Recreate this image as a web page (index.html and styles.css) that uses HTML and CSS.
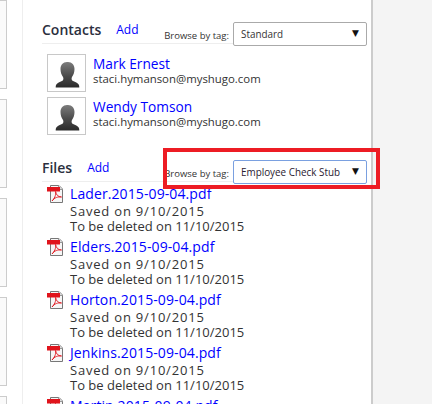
FILE: index.html
```html
<!DOCTYPE html>
<html lang="en">
<head>
  <meta charset="UTF-8">
  <title>Contacts and Files</title>
  <link rel="stylesheet" href="styles.css">
</head>
<body>

<svg width="0" height="0" class="defs">
  <linearGradient id="personFill" x1="0" y1="0" x2="0" y2="1">
    <stop offset="0" stop-color="#7c7c7c"/>
    <stop offset="0.55" stop-color="#4a4a4a"/>
    <stop offset="1" stop-color="#2b2b2b"/>
  </linearGradient>
  <symbol id="person" viewBox="0 0 37 36">
    <path d="M19 7c-4 0-6.500 3-6.500 7 0 3 1 6 2.500 8 .7 1 .5 3-.5 3.700-2 1.300-5 1.800-6 3.500-.7 1.100-.8 2-.8 3.300h23.600c0-1.300-.1-2.200-.8-3.300-1-1.700-4-2.200-6-3.500-1-.7-1.200-2.700-.5-3.700 1.500-2 2.500-5 2.500-8 0-4-2.500-7-6.500-7z" fill="url(#personFill)"/>
  </symbol>
  <symbol id="pdf" viewBox="0 0 16 18">
    <path d="M3.500 .5H12L15.500 4V17.500H3.500z" fill="#f6f6f6" stroke="#777"/>
    <path d="M11.500 .5V4.500H15.500" fill="#ddd" stroke="#999"/>
    <rect x="0" y="2" width="13" height="4.500" fill="#e0141c"/>
    <path d="M5 16C7 14 9.500 10 8.500 6.500 9 9.500 11 12 14.500 12 11 11.500 7.500 12.500 5 16z" fill="none" stroke="#e0141c" stroke-width="0.9"/>
  </symbol>
</svg>

<div class="side-panels">
  <div class="side-panel"></div>
  <div class="side-panel"></div>
  <div class="side-panel"></div>
  <div class="side-panel"></div>
  <div class="side-panel"></div>
</div>

<main class="content">
  <section class="contacts">
    <div class="section-head">
      <h2>Contacts</h2>
      <a href="#" class="add-link">Add</a>
      <div class="tag-filter">
        <span class="tag-label">Browse by tag:</span>
        <div class="select-box">Standard<span class="arrow">▼</span></div>
      </div>
    </div>
    <div class="contact">
      <div class="avatar"><svg width="37" height="36"><use href="#person"/></svg></div>
      <div class="contact-info">
        <a href="#">Mark Ernest</a>
        <div>staci.hymanson@myshugo.com</div>
      </div>
    </div>
    <div class="contact">
      <div class="avatar"><svg width="37" height="36"><use href="#person"/></svg></div>
      <div class="contact-info">
        <a href="#">Wendy Tomson</a>
        <div>staci.hymanson@myshugo.com</div>
      </div>
    </div>
  </section>

  <section class="files">
    <div class="section-head">
      <h2>Files</h2>
      <a href="#" class="add-link">Add</a>
      <div class="tag-filter highlighted">
        <span class="tag-label">Browse by tag:</span>
        <div class="select-box focused">Employee Check Stub<span class="arrow">▼</span></div>
      </div>
    </div>
    <div class="file">
      <svg width="16" height="18"><use href="#pdf"/></svg>
      <div class="file-info"><a href="#">Lader.2015-09-04.pdf</a><div class="saved">Saved on 9/10/2015</div><div>To be deleted on 11/10/2015</div></div>
    </div>
    <div class="file">
      <svg width="16" height="18"><use href="#pdf"/></svg>
      <div class="file-info"><a href="#">Elders.2015-09-04.pdf</a><div class="saved">Saved on 9/10/2015</div><div>To be deleted on 11/10/2015</div></div>
    </div>
    <div class="file">
      <svg width="16" height="18"><use href="#pdf"/></svg>
      <div class="file-info"><a href="#">Horton.2015-09-04.pdf</a><div class="saved">Saved on 9/10/2015</div><div>To be deleted on 11/10/2015</div></div>
    </div>
    <div class="file">
      <svg width="16" height="18"><use href="#pdf"/></svg>
      <div class="file-info"><a href="#">Jenkins.2015-09-04.pdf</a><div class="saved">Saved on 9/10/2015</div><div>To be deleted on 11/10/2015</div></div>
    </div>
    <div class="file file-cut">
      <svg width="16" height="18"><use href="#pdf"/></svg>
      <div class="file-info"><a href="#">Martin.2015-09-04.pdf</a></div>
    </div>
  </section>
</main>

</body>
</html>
```

FILE: styles.css
```css
* {
  margin: 0;
  padding: 0;
  box-sizing: border-box;
}

html, body {
  height: 404px;
  overflow: hidden;
}

body {
  display: flex;
  background: #f4f4f4;
  font-family: "Open Sans", sans-serif;
  font-size: 13px;
  color: #333;
}

a {
  color: #0000ff;
  text-decoration: none;
}

.defs {
  position: absolute;
}

.side-panels {
  width: 23px;
  flex: none;
  background: #fff;
  border-right: 1px solid #eee;
  display: flex;
  flex-direction: column;
  gap: 10px;
  overflow: hidden;
}

.side-panel {
  width: 7px;
  height: 89px;
  flex: none;
  background: #fafafa;
  border: 1px solid #ccc;
  border-left: none;
}

.content {
  width: 350px;
  height: 404px;
  flex: none;
  background: #fff;
  border-right: 2px solid #ccc;
  padding: 22px 4px 0 19px;
}

.section-head {
  display: flex;
  align-items: center;
  height: 22px;
  padding-bottom: 7px;
  border-bottom: 1px solid #eee;
  position: relative;
}

.section-head h2 {
  font-size: 14px;
  font-weight: 600;
  color: #2b2f3e;
}

.add-link {
  margin-left: 15px;
  font-size: 12px;
}

.tag-filter {
  margin-left: auto;
  align-self: flex-start;
  display: flex;
  align-items: center;
  gap: 4px;
  font-size: 9.5px;
}

.tag-label {
  margin-top: 2px;
}

.select-box {
  width: 134px;
  height: 24px;
  padding-left: 7px;
  border: 1px solid #aaa;
  border-radius: 2px;
  background: #fff;
  display: flex;
  align-items: center;
  justify-content: space-between;
  font-size: 9.9px;
}

.select-box.focused {
  border-color: #7aa0e0;
  color: #2a2030;
}

.arrow {
  margin-right: 7px;
  margin-top: -3px;
  font-family: "DejaVu Sans", sans-serif;
  font-size: 9px;
  color: #111;
}

.highlighted::after {
  content: "";
  box-sizing: border-box;
  position: absolute;
  right: -13px;
  top: -12px;
  width: 217px;
  height: 41px;
  border: 4px solid #ed1c24;
  pointer-events: none;
}

.contact {
  display: flex;
  gap: 7px;
  margin: 10px 0 0 5px;
}

.contact + .contact {
  margin-top: 5px;
}

.avatar {
  width: 39px;
  height: 38px;
  border: 1px solid #c8c8c8;
  display: flex;
  align-items: center;
  justify-content: center;
}

.contact-info {
  padding-top: 1px;
  font-size: 11.4px;
  line-height: 11px;
}

.contact-info a {
  display: block;
  font-size: 13.7px;
  line-height: 18px;
}

.files {
  margin-top: 25px;
}

.file {
  display: flex;
  gap: 7px;
  margin: 0 0 4px 5px;
  line-height: 15px;
}

.section-head + .file {
  margin-top: 3px;
}

.file svg {
  flex: none;
}

.file-cut {
  height: 7px;
  overflow: hidden;
}

.file-info a {
  display: block;
  margin-bottom: 2px;
  font-size: 14px;
  line-height: 17px;
  letter-spacing: 0.1px;
}

.saved {
  letter-spacing: 0.8px;
}
```
